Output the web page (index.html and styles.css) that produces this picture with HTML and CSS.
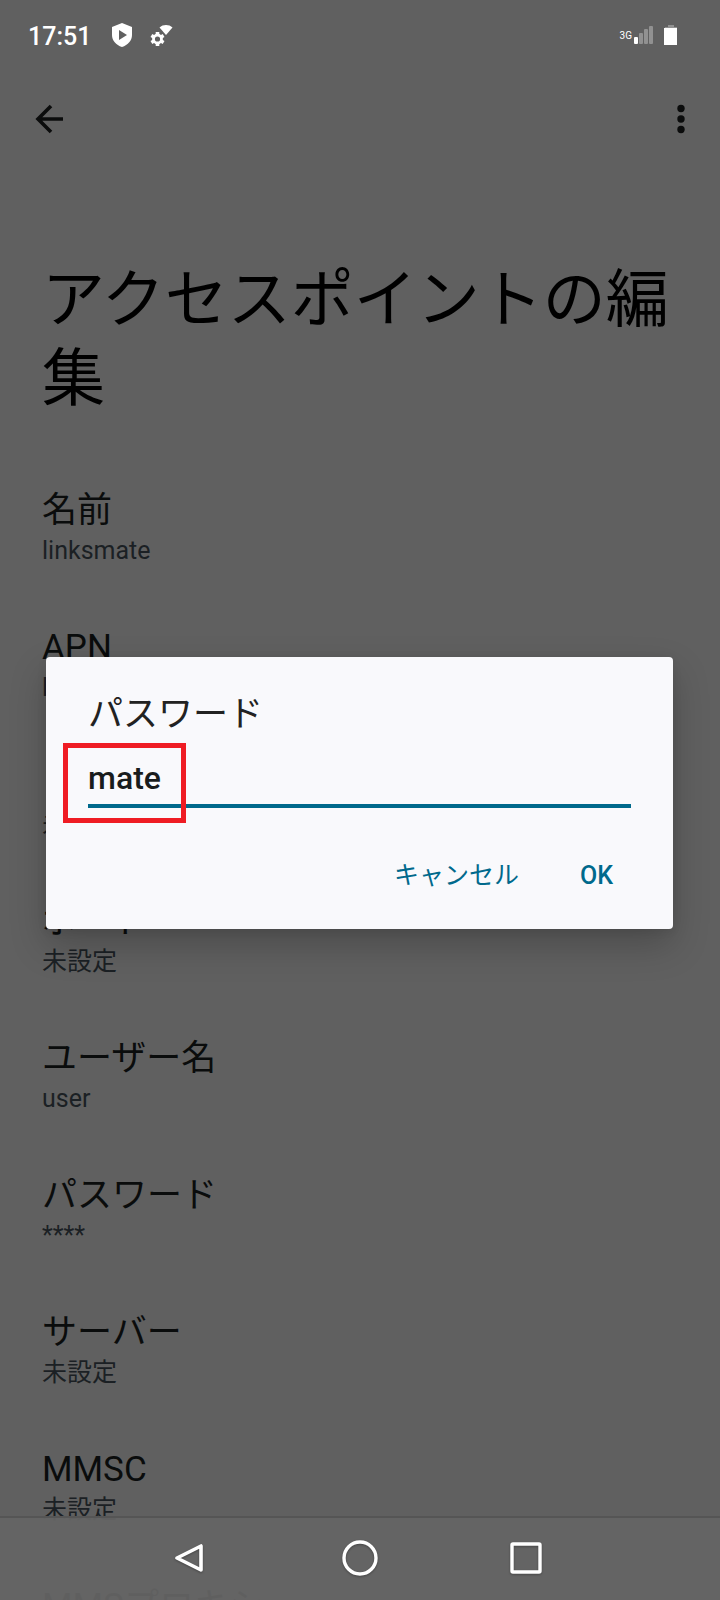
FILE: index.html
```html
<!DOCTYPE html>
<html lang="ja">
<head>
<meta charset="utf-8">
<meta name="viewport" content="width=device-width, initial-scale=1">
<title>アクセスポイントの編集</title>
<link rel="stylesheet" href="styles.css">
</head>
<body>
<header class="status">
  <span class="clock">17:51</span>
  <svg class="shield" width="22" height="26" viewBox="0 0 22 26" aria-hidden="true"><path fill="#fff" fill-rule="evenodd" d="M11 1 21 5v8c0 5.500-4 10-10 12C5 23 1 18.500 1 13V5zM8 8v10l8-5z"/></svg>
  <svg class="setup" width="24" height="24" viewBox="0 0 24 24" aria-hidden="true">
    <path fill="#fff" d="M9.500 4.500C13 1.200 19 1.200 22.500 4.500L16 12z"/>
    <circle cx="7.500" cy="16" r="4" fill="none" stroke="#fff" stroke-width="2.800"/>
    <path stroke="#fff" stroke-width="3.600" d="M7.500 9v3M7.500 20v3M1.400 12.500l2.600 1.500M11 18l2.600 1.500M1.400 19.500 4 18M11 14l2.600-1.500"/>
  </svg>
  <span class="network">3G</span>
  <svg class="signal" width="20" height="20" viewBox="0 0 20 20" aria-hidden="true"><rect y="12" width="4" height="7" rx="1" fill="#fff"/><g fill="#919191"><rect x="5" y="8" width="4" height="11" rx="1"/><rect x="10" y="4" width="4" height="15" rx="1"/><rect x="15" y="1" width="4" height="18" rx="1"/></g></svg>
  <svg width="14" height="22" viewBox="0 0 14 22" aria-hidden="true"><path fill="#919191" d="M4 1h6v2h3v3H1V3h3z"/><path fill="#fff" d="M0 4h13v17H0z"/></svg>
</header>
<nav class="toolbar">
  <button class="icon" type="button" aria-label="戻る"><svg width="30" height="30" viewBox="0 0 30 30"><path fill="none" stroke="#0b0c0c" stroke-width="3.600" d="M29 15H4M17 2 4 15l13 13"/></svg></button>
  <button class="icon" type="button" aria-label="その他"><svg width="10" height="30" viewBox="0 0 10 30"><g fill="#0b0c0c"><circle cx="5" cy="4.500" r="3.700"/><circle cx="5" cy="15" r="3.700"/><circle cx="5" cy="25.500" r="3.700"/></g></svg></button>
</nav>
<main class="page">
  <h1 class="heading">アクセスポイントの編集</h1>
  <dl class="list">
    <div class="row"><dt>名前</dt><dd>linksmate</dd></div>
    <div class="row"><dt>APN</dt><dd>linksmate.jp</dd></div>
    <div class="row"><dt>プロキシ</dt><dd>未設定</dd></div>
    <div class="row"><dt>ポート</dt><dd>未設定</dd></div>
    <div class="row"><dt>ユーザー名</dt><dd>user</dd></div>
    <div class="row"><dt>パスワード</dt><dd>****</dd></div>
    <div class="row"><dt>サーバー</dt><dd>未設定</dd></div>
    <div class="row"><dt>MMSC</dt><dd>未設定</dd></div>
    <div class="row"><dt>MMSプロキシ</dt></div>
  </dl>
</main>
<div class="overlay">
  <form class="dialog" role="dialog" aria-labelledby="dialog-title">
    <label class="dialog-title" id="dialog-title" for="password">パスワード</label>
    <div class="field">
      <input class="input" id="password" type="text" value="mate">
      <span class="marker"></span>
    </div>
    <div class="actions">
      <button class="action" type="button">キャンセル</button>
      <button class="action" type="button">OK</button>
    </div>
  </form>
</div>
<nav class="navbar">
  <button class="icon" type="button" aria-label="戻る"><svg width="40" height="40" viewBox="0 0 40 40"><path fill="none" stroke="#fff" stroke-width="3.600" stroke-linejoin="round" d="M27 8v24L3 20z"/></svg></button>
  <button class="icon" type="button" aria-label="ホーム"><svg width="40" height="40" viewBox="0 0 40 40"><circle cx="20" cy="20" r="16" fill="none" stroke="#fff" stroke-width="3.400"/></svg></button>
  <button class="icon" type="button" aria-label="履歴"><svg width="40" height="40" viewBox="0 0 40 40"><rect x="6" y="6" width="28" height="28" rx="1" fill="none" stroke="#fff" stroke-width="3.400"/></svg></button>
</nav>
</body>
</html>
```
FILE: styles.css
```css
* { box-sizing: border-box; }
body {
  margin: 0;
  height: 100vh;
  overflow: hidden;
  background: #606060;
  font-family: Roboto, "Noto Sans CJK JP", sans-serif;
  color: #0a0c0c;
}
svg { display: block; }
button { border: 0; background: none; padding: 0; font: inherit; color: inherit; }

.status {
  display: flex;
  align-items: center;
  height: 70px;
  padding: 0 42px 0 28px;
  color: #fff;
}
.clock { font-size: 25px; font-weight: 500; line-height: 28px; padding-top: 4px; }
.shield { margin-left: 20px; }
.setup { margin-left: 17px; }
.network { margin-left: auto; font-size: 10px; }
.signal { margin: 0 10px 0 2px; }

.toolbar {
  display: flex;
  justify-content: space-between;
  align-items: center;
  height: 98px;
  padding: 0 34px;
}

.page { padding: 92px 42px 0; }
.heading {
  margin: 0;
  font-size: 63px;
  font-weight: 400;
  line-height: 79px;
  color: #000;
}
.list { margin: 54px 0 0; }
.row { height: 137px; padding-top: 17px; }
.row dt { font-size: 35px; line-height: 44px; }
.row dd { margin: 0; padding-top: 2px; font-size: 25px; line-height: 32px; color: #1b2024; }

.overlay {
  position: absolute;
  inset: 0;
  display: flex;
  align-items: center;
  padding: 0 47px 14px 46px;
}
.dialog {
  flex: 1;
  padding: 35px 42px 27px;
  border-radius: 4px;
  background: #f9f9fc;
  box-shadow: 0 16px 36px rgba(0, 0, 0, .22), 0 2px 10px rgba(0, 0, 0, .08);
}
.dialog-title { display: block; font-size: 35px; line-height: 46px; color: #222; }
.field { position: relative; padding-top: 13px; }
.input {
  display: block;
  width: 100%;
  height: 57px;
  padding: 0;
  border: 0;
  border-bottom: 4px solid #00698c;
  outline: 0;
  background: none;
  font: 500 32px/40px Roboto, "Noto Sans CJK JP", sans-serif;
  color: #191c1d;
}
.marker {
  position: absolute;
  left: -25px;
  top: 5px;
  width: 123px;
  height: 80px;
  border: 5px solid #ef1c24;
}
.actions { display: flex; justify-content: flex-end; gap: 61px; padding: 41px 18px 0 0; }
.action { font-size: 25px; line-height: 53px; font-weight: 500; color: #00698c; }
.action:first-child { font-weight: 400; }

.navbar {
  position: absolute;
  inset: auto 0 0;
  display: flex;
  justify-content: center;
  align-items: center;
  gap: 126px;
  height: 84px;
  padding-bottom: 3px;
  border-top: 2px solid #555;
  background: rgba(100, 100, 100, .95);
}
.navbar svg { filter: drop-shadow(0 1px 1px rgba(0, 0, 0, .3)); }
```
